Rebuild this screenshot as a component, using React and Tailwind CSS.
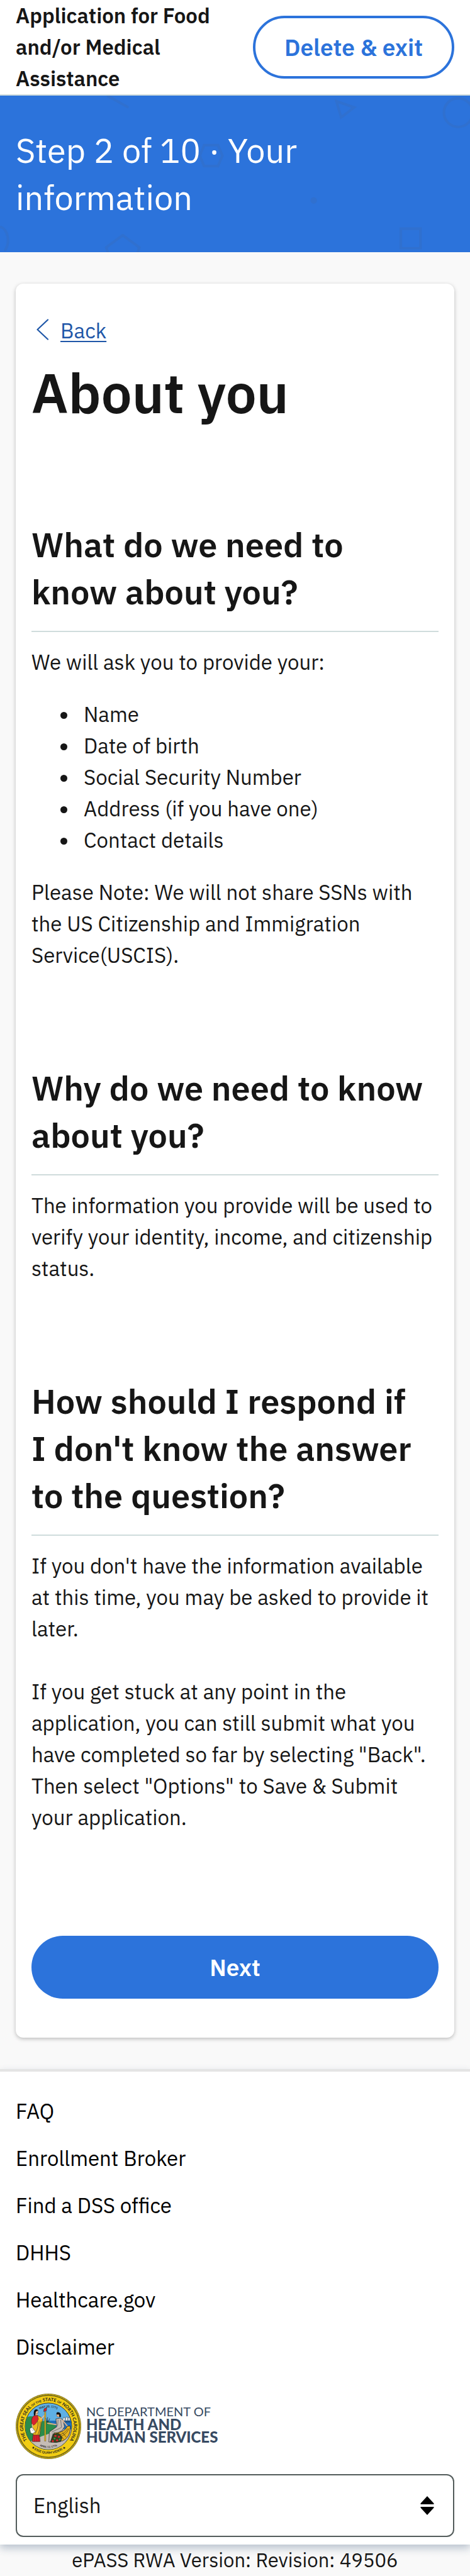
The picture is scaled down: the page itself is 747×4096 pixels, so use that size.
const linkItems = ["FAQ", "Enrollment Broker", "Find a DSS office", "DHHS", "Healthcare.gov", "Disclaimer"];
const details = ["Name", "Date of birth", "Social Security Number", "Address (if you have one)", "Contact details"];

function BandShapes() {
  return (
    <svg aria-hidden="true" viewBox="0 0 1080 360" preserveAspectRatio="xMidYMid slice" className="absolute inset-0 h-full w-full" fill="none" stroke="#555" strokeOpacity="0.09" strokeWidth="6">
      <path d="M248 1 293 26" strokeLinecap="round" />
      <path d="M773 13 814 27 784 50Z" />
      <circle cx="1053" cy="39" r="33" />
      <path d="M469 114H501L511 138 501 162H469L459 138Z" />
      <circle cx="721" cy="241" r="7.500" fill="#555" fillOpacity="0.09" stroke="none" />
      <path d="M921 306H966V351H921Z" />
      <path d="M282 321 320 349 306 392H258L244 349Z" strokeLinejoin="round" />
      <path d="M2 302C18 308 24 336 12 355" strokeLinecap="round" />
    </svg>
  );
}

function Seal() {
  return (
    <svg viewBox="0 0 150 150" role="img" aria-label="State seal" className="h-[104px] w-[104px] shrink-0 font-[Lato,sans-serif]">
      <defs>
        <clipPath id="disc"><circle cx="75" cy="75" r="53" /></clipPath>
        <path id="ringTop" d="M29.300 110.700A58 58 0 1 1 120.700 110.700" />
        <path id="ringBottom" d="M22 109A63 63 0 0 0 128 109" />
        <path id="innerTop" d="M38 52A43.500 43.500 0 0 1 112 52" />
        <path id="innerBottom" d="M40 110A49.500 49.500 0 0 0 110 110" />
      </defs>
      <circle cx="75" cy="75" r="75" fill="#6f6420" />
      <circle cx="75" cy="75" r="73" fill="none" stroke="#e8c91a" strokeWidth="2.500" strokeDasharray="1.500 1" />
      <circle cx="75" cy="75" r="70.500" fill="#f2cd13" stroke="#3a3512" strokeWidth="0.800" />
      <circle cx="75" cy="75" r="53.500" fill="#5fb0e4" stroke="#222" strokeWidth="1.200" />
      <g clipPath="url(#disc)">
        <path d="M66 62H130V84H66Z" fill="#1f70bd" />
        <path d="M20 58C32 47 48 52 56 64C70 60 82 66 92 74L96 130H20Z" fill="#2b8c4b" />
        <path d="M34 110C58 96 84 92 94 82L130 82V130H20Z" fill="#c5bcb5" />
        <path d="M111 64V54M117 64V53M122 64V54M106 65H126" stroke="#222" strokeWidth="1" />
        <path d="M109 55H113V62H108ZM115 54H119V62H114ZM120 55H124V62H120Z" fill="#eee" stroke="#222" strokeWidth="0.500" />
        <path d="M40 94 38 110H56L54 92Z" fill="#d9232e" stroke="#222" strokeWidth="0.800" />
        <path d="M44 95 43 110M48 95V110M52 94 52 110" stroke="#7d1018" strokeWidth="0.700" />
        <path d="M45 46H50V53H44Z" fill="#eab78f" />
        <path d="M41 51C36 58 35 68 38 72L40 95H55L59 66L62 60L58 54L50 50Z" fill="#edb91d" stroke="#222" strokeWidth="0.800" />
        <path d="M41 51 50 50 52 58C48 68 42 74 38 72C35 64 36 56 41 51Z" fill="#d9232e" stroke="#222" strokeWidth="0.600" />
        <path d="M50 62C53 72 49 84 44 92M56 64C57 76 54 86 51 94" stroke="#333" strokeWidth="1" fill="none" />
        <path d="M57 59 66 50M38 71 39 80" stroke="#eab78f" strokeWidth="2.500" strokeLinecap="round" />
        <circle cx="47" cy="42" r="4.500" fill="#eab78f" stroke="#222" strokeWidth="0.600" />
        <path d="M42 50C39 36 48 33 52 39C47 39 45 42 45 50Z" fill="#111" />
        <path d="M32 80 38 77 45 87 39 92 34 90Z" fill="#fff" stroke="#222" strokeWidth="0.800" />
        <path d="M36 82 40 80M37 85 42 83" stroke="#555" strokeWidth="0.600" />
        <path d="M66 42H69V109H66Z" fill="#edb91d" stroke="#222" strokeWidth="0.500" />
        <path d="M64 41 65 35 71 32 70 40Z" fill="#d9232e" stroke="#222" strokeWidth="0.800" />
        <path d="M69 56 73 68 78 57M73 54V70" stroke="#222" strokeWidth="1" fill="none" />
        <path d="M92 58 103 56 109 62 112 76 106 85 92 92 84 111H76L77 88L94 76Z" fill="#c5bcb5" stroke="#222" strokeWidth="1" />
        <path d="M80 110 86 90M83 88 104 78M97 60 96 74M103 60 105 78" stroke="#333" strokeWidth="0.800" fill="none" />
        <path d="M73 68 92 71M108 62 118 74" stroke="#eab78f" strokeWidth="2.500" strokeLinecap="round" />
        <circle cx="98" cy="49" r="4.500" fill="#eab78f" stroke="#222" strokeWidth="0.500" />
        <path d="M94 48C91 42 99 40 103 46L104 53 100 54 99 48Z" fill="#111" />
        <path d="M88 90C98 90 112 88 118 75L125 74C126 94 118 104 106 109L92 103Z" fill="#e9b41b" stroke="#222" strokeWidth="1.200" />
        <path d="M92 95C102 95 113 92 119 80M95 99C106 99 116 94 122 80M100 91 110 105M107 89 116 100" stroke="#222" strokeWidth="0.900" fill="none" />
        <path d="M86 93 98 91 106 101 103 110 92 112 80 111Z" fill="#34451f" stroke="#111" strokeWidth="1" />
        <g fill="#d9232e"><circle cx="91" cy="97" r="2.500" /><circle cx="99" cy="99" r="2.500" /><circle cx="85" cy="109" r="2.500" /><circle cx="95" cy="107" r="2.500" /></g>
        <circle cx="89" cy="103" r="2" fill="#2fa04f" /><circle cx="101" cy="105" r="2" fill="#2fa04f" />
      </g>
      <g fill="#222" textAnchor="middle" fontWeight="700">
        <text fontSize="10.400"><textPath href="#ringTop" startOffset="50%">THE GREAT SEAL <tspan fontSize="7">OF THE</tspan> STATE <tspan fontSize="7">OF</tspan> NORTH CAROLINA</textPath></text>
        <text fontSize="7.500"><textPath href="#ringBottom" startOffset="50%">★ ESSE QUAM VIDERI ★</textPath></text>
        <text fontSize="6.500"><textPath href="#innerTop" startOffset="50%">MAY 20, 1775</textPath></text>
        <text fontSize="6"><textPath href="#innerBottom" startOffset="50%">APRIL 12, 1776</textPath></text>
      </g>
    </svg>
  );
}

function Section({ title, children }) {
  return (
    <section className="mt-[149px]">
      <h2 className="border-b-2 border-[#cfdcdc] pr-4 pb-6 text-[54px] leading-[75px] font-semibold">{title}</h2>
      <div className="mt-[23px]">{children}</div>
    </section>
  );
}

export default function App() {
  return (
    <div className="min-h-screen bg-[#f9f9f9] font-['IBM_Plex_Sans',Roboto,sans-serif] text-[33px] leading-[50px] text-[#161616]">
      <header className="flex items-center justify-between border-b-2 border-[#cfdcdc] bg-white px-[25px]">
        <p className="w-[330px] font-semibold">Application for Food and/or Medical Assistance</p>
        <button type="button" className="h-[100px] rounded-full border-4 border-[#2c73db] px-[46px] text-[37px] font-semibold text-[#2c73db]">Delete &amp; exit</button>
      </header>

      <div className="relative overflow-hidden bg-[#2c73db] px-[25px] pt-[50px] pb-[49px] text-white">
        <BandShapes />
        <p className="relative max-w-[560px] text-[54px] leading-[75px]">Step 2 of 10 · Your information</p>
      </div>

      <main className="mx-[25px] mt-[50px] rounded-xl bg-white px-[25px] pt-[50px] pb-[62px] shadow-[0_2px_6px_rgba(0,0,0,0.25)]">
        <a href="#back" className="flex w-fit items-center text-[#1f57a8]">
          <svg aria-hidden="true" viewBox="0 0 20 34" className="mr-[18px] mb-1 ml-2 h-[34px] w-5" fill="none" stroke="currentColor" strokeWidth="2.200" strokeLinecap="round" strokeLinejoin="round"><path d="M18 1.500 1.500 17 18 32.500" /></svg>
          <span className="underline decoration-2 underline-offset-4">Back</span>
        </a>
        <h1 className="mt-[18px] text-[87px] leading-[111px] font-semibold">About you</h1>

        <Section title="What do we need to know about you?">
          <p>We will ask you to provide your:</p>
          <ul className="my-[33px] list-disc pl-[75px]">
            {details.map((d) => <li key={d} className="pl-2">{d}</li>)}
          </ul>
          <p>Please Note: We will not share SSNs with the US Citizenship and Immigration Service(USCIS).</p>
        </Section>

        <Section title="Why do we need to know about you?">
          <p>The information you provide will be used to verify your identity, income, and citizenship status.</p>
        </Section>

        <Section title={"How should I respond if I\u00a0don't know the answer to the question?"}>
          <p>If you don't have the information available at this time, you may be asked to provide it later.</p>
          <p className="mt-[50px]">If you get stuck at any point in the application, you can still submit what you have completed so far by selecting "Back". Then select "Options" to Save &amp; Submit your application.</p>
        </Section>

        <button type="button" className="mt-[163px] h-[100px] w-full rounded-full bg-[#2c73db] text-[37px] font-semibold text-white">Next</button>
      </main>

      <footer className="relative mt-[50px] border-t-4 border-[#e4e4e4] bg-white px-[25px] pt-[38px] pb-3 text-black shadow-[0_6px_12px_rgba(40,70,110,0.3)]">
        <nav className="flex flex-col items-start gap-[25px]">
          {linkItems.map((l) => <a key={l} href="#footer">{l}</a>)}
        </nav>
        <div className="mt-[49px] flex items-center gap-2">
          <Seal />
          <div className="pb-2 font-[Lato,sans-serif] text-[#374a62]">
            <p className="text-[20px] leading-[22px]">NC DEPARTMENT OF</p>
            <p className="text-[24px] leading-[20px] font-black">HEALTH AND</p>
            <p className="text-[24px] leading-[20px] font-black">HUMAN SERVICES</p>
          </div>
        </div>
        <div className="relative mt-6">
          <select aria-label="Language" className="h-[100px] w-full appearance-none rounded-xl border-2 border-[#535c5b] bg-white pr-16 pl-[26px] text-[#161616]">
            <option>English</option>
          </select>
          <svg aria-hidden="true" viewBox="0 0 22 30" className="pointer-events-none absolute top-[35px] right-8 h-[30px] w-[22px]"><path d="M11 0 21.500 11.500V13H.5V11.500ZM.5 17H21.500V18.500L11 30 .5 18.500Z" /></svg>
        </div>
      </footer>
      <p className="relative text-center text-[31px]">ePASS RWA Version: Revision: 49506</p>
    </div>
  );
}
